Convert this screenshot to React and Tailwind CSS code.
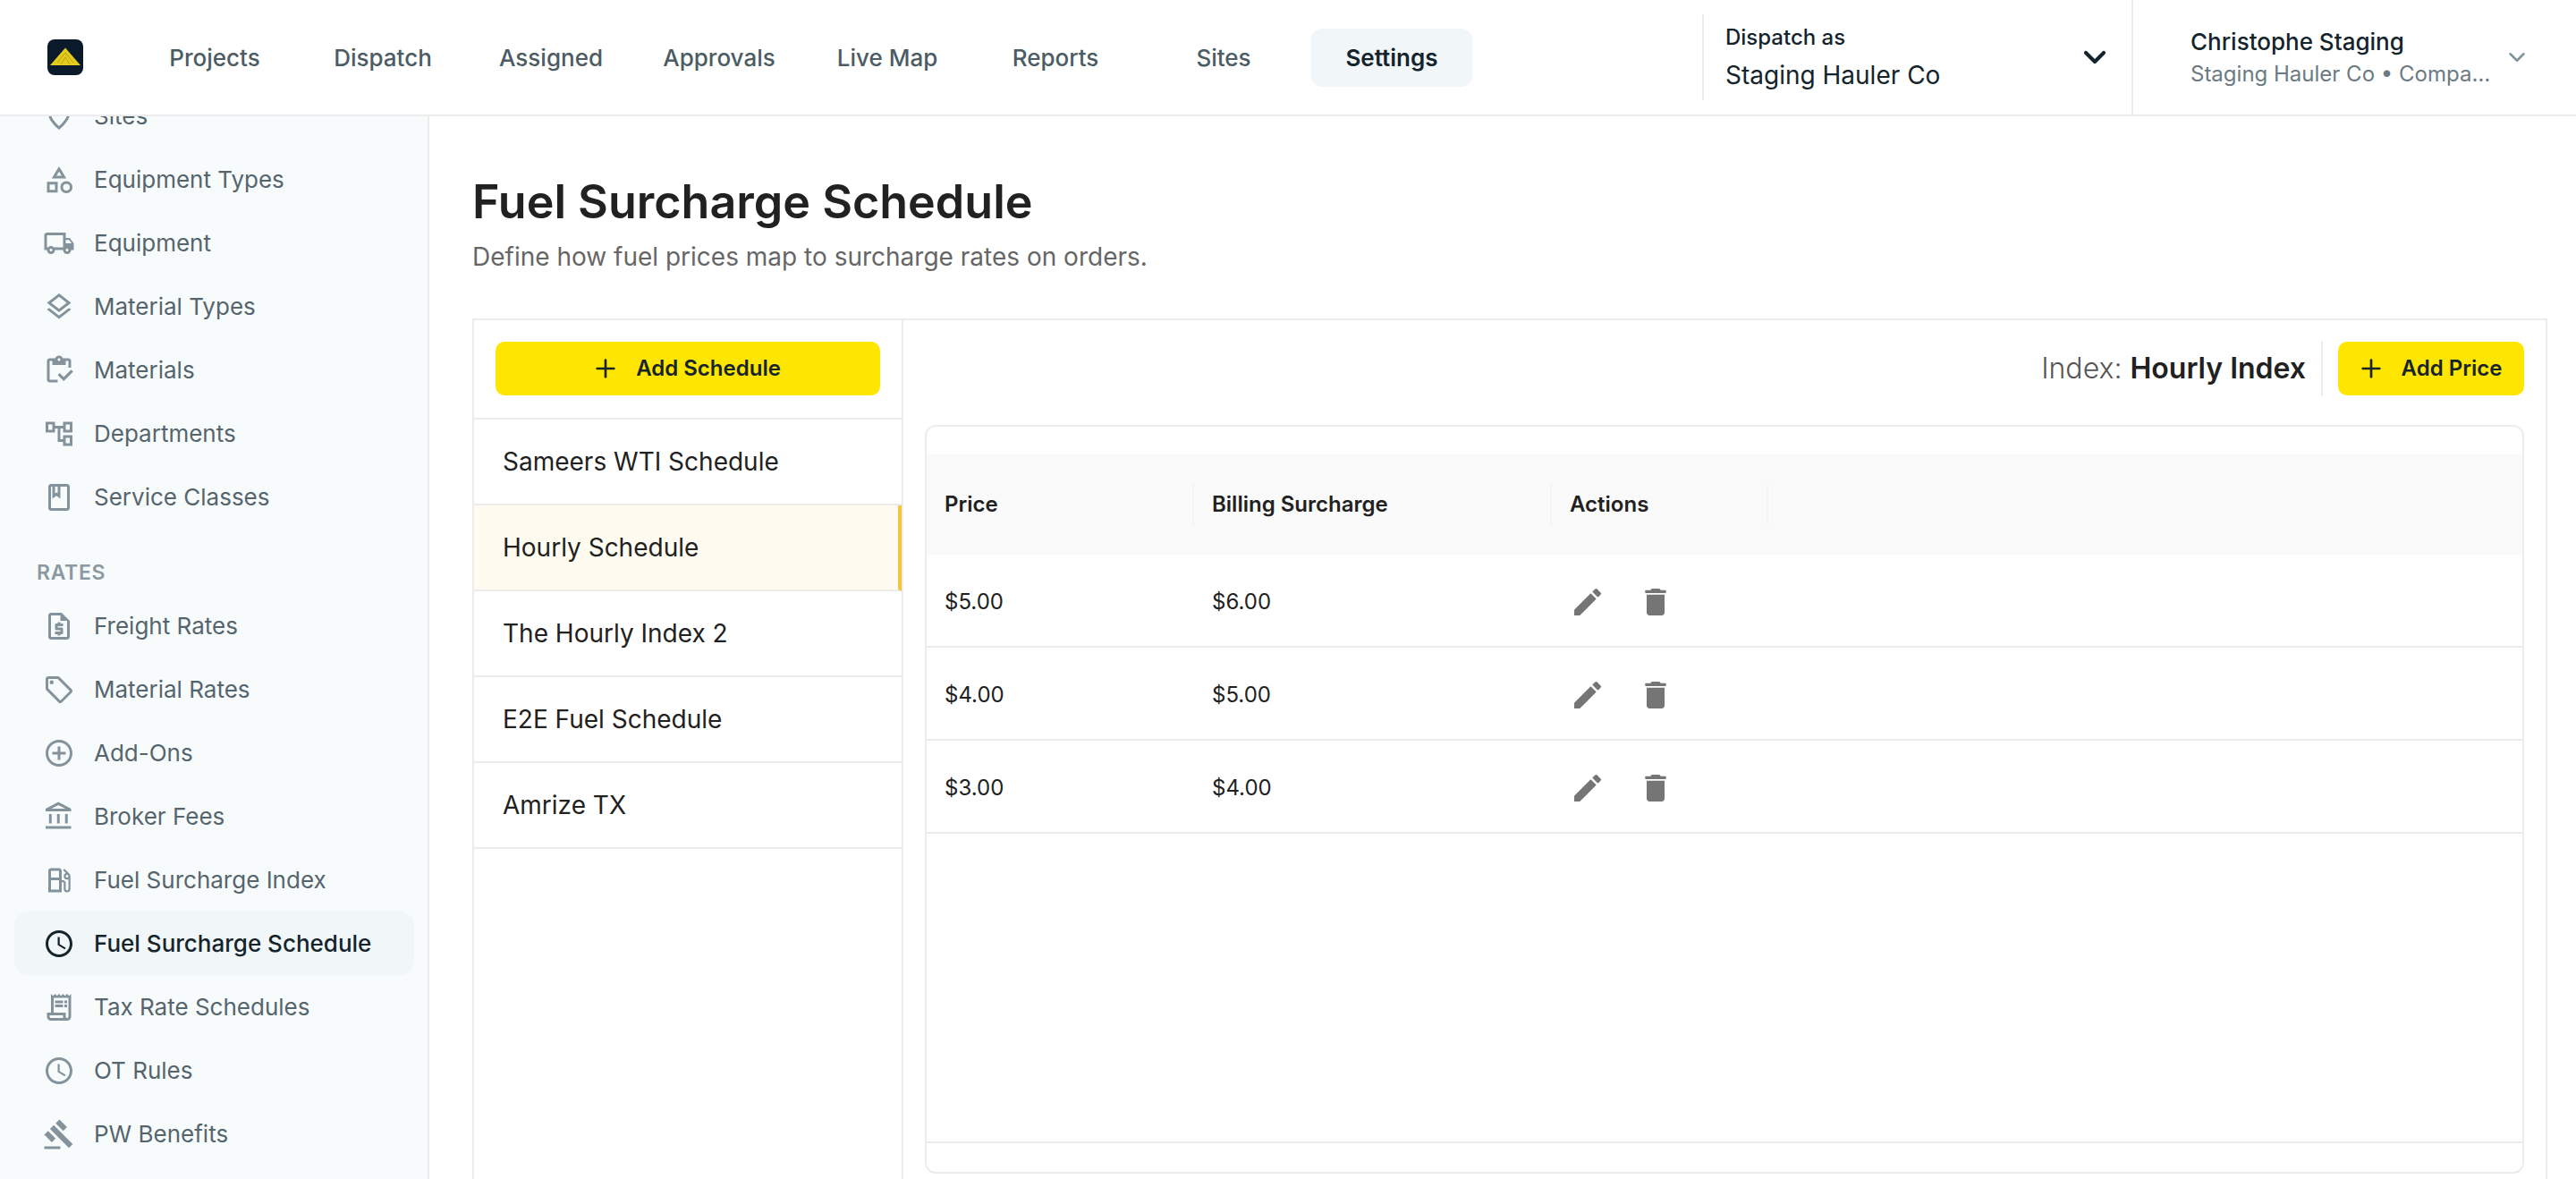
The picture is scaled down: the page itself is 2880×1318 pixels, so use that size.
import { ChevronDown, Plus } from "lucide-react";
import {
  MdAccessTime,
  MdAddCircleOutline,
  MdDelete,
  MdEdit,
  MdGavel,
  MdOutlineAccountBalance,
  MdOutlineAccountTree,
  MdOutlineBook,
  MdOutlineCategory,
  MdOutlineInventory,
  MdOutlineLayers,
  MdOutlineLocalGasStation,
  MdOutlineLocalOffer,
  MdOutlineLocalShipping,
  MdOutlinePlace,
  MdOutlineReceiptLong,
  MdOutlineRequestQuote,
} from "react-icons/md";

const navItems = ["Projects", "Dispatch", "Assigned", "Approvals", "Live Map", "Reports", "Sites", "Settings"];

const setupLinks = [
  { Icon: MdOutlinePlace, label: "Sites" },
  { Icon: MdOutlineCategory, label: "Equipment Types" },
  { Icon: MdOutlineLocalShipping, label: "Equipment" },
  { Icon: MdOutlineLayers, label: "Material Types" },
  { Icon: MdOutlineInventory, label: "Materials" },
  { Icon: MdOutlineAccountTree, label: "Departments" },
  { Icon: MdOutlineBook, label: "Service Classes" },
];

const rateLinks = [
  { Icon: MdOutlineRequestQuote, label: "Freight Rates" },
  { Icon: MdOutlineLocalOffer, label: "Material Rates" },
  { Icon: MdAddCircleOutline, label: "Add-Ons" },
  { Icon: MdOutlineAccountBalance, label: "Broker Fees" },
  { Icon: MdOutlineLocalGasStation, label: "Fuel Surcharge Index" },
  { Icon: MdAccessTime, label: "Fuel Surcharge Schedule", active: true },
  { Icon: MdOutlineReceiptLong, label: "Tax Rate Schedules" },
  { Icon: MdAccessTime, label: "OT Rules" },
  { Icon: MdGavel, label: "PW Benefits" },
];

const schedules = ["Sameers WTI Schedule", "Hourly Schedule", "The Hourly Index 2", "E2E Fuel Schedule", "Amrize TX"];

const prices = [
  ["$5.00", "$6.00"],
  ["$4.00", "$5.00"],
  ["$3.00", "$4.00"],
];

function Logo() {
  return (
    <svg width="40" height="40" viewBox="0 0 40 40" className="shrink-0">
      <rect width="40" height="40" rx="8" fill="#0b1a2b" />
      <path d="M20 9.5 37 29H3z" fill="#e3cb1c" />
      <path d="M20 15 29 26M20 15 11 26M20 20 25 28M20 20 15 28" stroke="#b8a414" strokeWidth="1" fill="none" />
    </svg>
  );
}

function SideLink({ Icon, label, active }) {
  return (
    <div
      className={`flex h-[71px] items-center rounded-2xl pl-8 ${
        active ? "bg-[#f1f6f9] font-medium text-[#14242c]" : "text-[#55656e]"
      }`}
    >
      <Icon size={36} className={`shrink-0 ${active ? "text-[#14242c]" : "text-[#84939b]"}`} />
      <span className="ml-[21px] text-[26px] leading-none">{label}</span>
    </div>
  );
}

function AddButton({ label, className }) {
  return (
    <button className={`flex h-[60px] items-center justify-center gap-[18px] rounded-[10px] bg-[#ffe600] pr-1 text-[24px] font-semibold text-[#17252b] ${className}`}>
      <Plus size={32} strokeWidth={2} />
      {label}
    </button>
  );
}

export default function App() {
  return (
    <div className="flex h-screen flex-col overflow-hidden bg-white font-['Inter',sans-serif]">
      <header className="flex h-[130px] shrink-0 items-center border-b-2 border-[#ececec] pl-[53px]">
        <Logo />
        <nav className="ml-[57px] flex gap-2">
          {navItems.map((item) => (
            <a
              key={item}
              className={`flex h-[65px] w-[180px] items-center justify-center rounded-xl text-[26px] font-medium ${
                item === "Settings" ? "bg-[#f1f6f9] font-semibold text-[#14242c]" : "text-[#4c5c64]"
              }`}
            >
              {item}
            </a>
          ))}
        </nav>

        <div className="ml-auto flex h-[96px] w-[480px] items-center justify-between border-l-2 border-[#ececec] pl-[24px] pr-[21px]">
          <div className="flex flex-col">
            <span className="text-[24px] font-medium leading-[30px] text-[#14242c]">Dispatch as</span>
            <span className="mt-[10px] text-[28px] leading-[34px] text-[#14242c]">Staging Hauler Co</span>
          </div>
          <ChevronDown size={40} strokeWidth={2.5} className="text-[#14242c]" />
        </div>

        <div className="flex h-full w-[497px] items-center justify-between border-l-2 border-[#ececec] pl-[64px] pr-[51px]">
          <div className="flex w-[336px] flex-col">
            <span className="text-[26px] font-medium leading-[34px] text-[#14242c]">Christophe Staging</span>
            <span className="mt-[4px] truncate text-[24px] leading-[30px] text-[#6b7a83]">Staging Hauler Co • Company Admin</span>
          </div>
          <ChevronDown size={30} strokeWidth={2} className="text-[#84939b]" />
        </div>
      </header>

      <div className="flex min-h-0 flex-1">
        <aside className="w-[480px] shrink-0 overflow-hidden border-r-2 border-[#ececec] bg-[#f8fbfc] pl-4 pr-[15px]">
          <div className="-mt-9">
            {setupLinks.map((link) => (
              <SideLink key={link.label} {...link} />
            ))}
            <div className="flex h-[73px] items-end pb-3 pl-[25px] text-[23px] font-semibold leading-none tracking-[0.03em] text-[#8a99a2]">
              RATES
            </div>
            {rateLinks.map((link) => (
              <SideLink key={link.label} {...link} />
            ))}
          </div>
        </aside>

        <main className="min-w-0 flex-1 overflow-hidden pl-12 pr-[32px]">
          <h1 className="mt-[62px] text-[52px] font-semibold leading-[68px] text-[#212121]">Fuel Surcharge Schedule</h1>
          <p className="mt-[7px] text-[28px] leading-[40px] text-[#666]">Define how fuel prices map to surcharge rates on orders.</p>

          <div className="mt-[49px] flex h-[1000px] border-2 border-[#ececec]">
            <div className="w-[480px] shrink-0 border-r-2 border-[#ececec]">
              <div className="h-[111px] border-b-2 border-[#ececec] px-6 pt-6">
                <AddButton label="Add Schedule" className="w-full" />
              </div>
              {schedules.map((name) => (
                <div
                  key={name}
                  className={`flex h-[96px] items-center border-b-2 border-[#ececec] pl-8 text-[28px] text-[#212121] ${
                    name === "Hourly Schedule" ? "border-r-4 border-r-[#f3c63f] bg-[#fffbf0]" : ""
                  }`}
                >
                  {name}
                </div>
              ))}
            </div>

            <div className="flex min-w-0 flex-1 flex-col px-6 pt-6">
              <div className="flex h-[60px] items-center justify-end">
                <span className="text-[32px] font-light text-[#555]">
                  Index: <span className="font-semibold text-[#212121]">Hourly Index</span>
                </span>
                <div className="ml-[17px] h-full border-l-2 border-[#ececec]" />
                <AddButton label="Add Price" className="ml-[17px] w-[208px]" />
              </div>

              <div className="mt-[33px] flex h-[837px] flex-col rounded-xl border-2 border-[#ececec]">
                <div className="mt-[31px] grid h-[112px] grid-cols-[299px_400px_242px_1fr] items-center bg-[#fafafa] text-[24px] font-semibold text-[#212121]">
                  {["Price", "Billing Surcharge", "Actions", ""].map((title) => (
                    <div key={title} className="flex h-12 items-center border-r-2 border-[#f5f5f5] pl-5 last:border-r-0">
                      {title}
                    </div>
                  ))}
                </div>

                {prices.map(([price, surcharge]) => (
                  <div
                    key={price}
                    className="grid h-[104px] grid-cols-[299px_400px_242px_1fr] items-center border-b-2 border-[#ececec] pt-[3px] text-[24px] text-[#212121]"
                  >
                    <div className="pl-5">{price}</div>
                    <div className="pl-5">{surcharge}</div>
                    <div className="flex items-center gap-9 pl-5 text-[#757575]">
                      <MdEdit size={40} />
                      <MdDelete size={40} />
                    </div>
                  </div>
                ))}

                <div className="flex-1" />
                <div className="h-[34px] border-t-2 border-[#ececec]" />
              </div>
            </div>
          </div>
        </main>
      </div>
    </div>
  );
}
